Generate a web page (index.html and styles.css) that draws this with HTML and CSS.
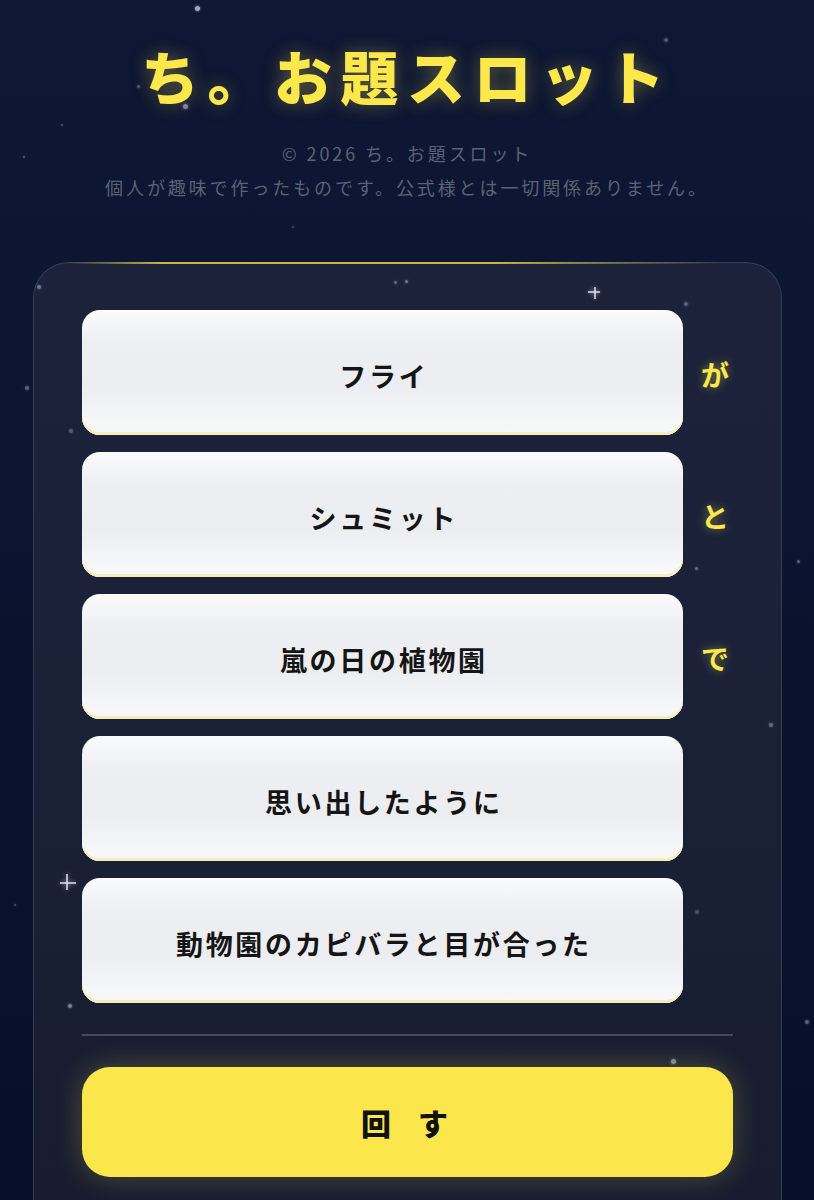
FILE: index.html
```html
<!DOCTYPE html>
<html lang="ja">
<head>
<meta charset="utf-8">
<title>ち。お題スロット</title>
<link rel="stylesheet" href="styles.css">
</head>
<body>
<div class="sky">
  <span class="star s1"></span><span class="star s2"></span><span class="star s3"></span>
  <span class="star s4"></span><span class="star s5"></span><span class="star s6"></span>
  <span class="star s7"></span><span class="star s8"></span><span class="star s9"></span>
  <span class="star s10"></span><span class="star s11"></span><span class="star s12"></span>
  <span class="star s13"></span><span class="star s14"></span><span class="star s15"></span>
  <span class="star s16"></span><span class="star s17"></span><span class="star s18"></span>
  <span class="star s19"></span><span class="star s20"></span><span class="star s21"></span>
  <span class="sparkle k1"></span><span class="sparkle k2"></span>
</div>
<header class="header">
  <h1 class="title">ち。お題スロット</h1>
  <p class="note">© 2026 ち。お題スロット</p>
  <p class="note">個人が趣味で作ったものです。公式様とは一切関係ありません。</p>
</header>
<main class="card">
  <div class="slots">
    <div class="row"><div class="reel">フライ</div><span class="joint">が</span></div>
    <div class="row"><div class="reel">シュミット</div><span class="joint">と</span></div>
    <div class="row"><div class="reel">嵐の日の植物園</div><span class="joint">で</span></div>
    <div class="row"><div class="reel">思い出したように</div><span class="joint"></span></div>
    <div class="row"><div class="reel">動物園のカピバラと目が合った</div><span class="joint"></span></div>
  </div>
  <hr class="divider">
  <button class="spin" type="button">回 す</button>
</main>
</body>
</html>
```
FILE: styles.css
```css
html, body {
  margin: 0;
  padding: 0;
}
body {
  min-height: 1200px;
  background: linear-gradient(180deg, #0e1733 0%, #0b1430 40%, #080f28 100%);
  font-family: "Noto Sans CJK JP", "Noto Sans", sans-serif;
  overflow: hidden;
  position: relative;
}
.sky {
  position: absolute;
  inset: 0;
  pointer-events: none;
  z-index: 2;
}
.star {
  position: absolute;
  width: 3px;
  height: 3px;
  border-radius: 50%;
  background: rgba(200, 210, 235, 0.7);
  box-shadow: 0 0 3px rgba(200, 210, 235, 0.6);
}
.s1 { left: 195px; top: 6px; width: 5px; height: 5px; background: rgba(190, 205, 240, 0.8); }
.s2 { left: 137px; top: 85px; opacity: 0.5; }
.s3 { left: 183px; top: 104px; width: 5px; height: 5px; opacity: 0.8; }
.s4 { left: 61px; top: 124px; width: 2px; height: 2px; opacity: 0.5; }
.s5 { left: 23px; top: 156px; width: 2px; height: 2px; opacity: 0.5; }
.s6 { left: 664px; top: 38px; width: 4px; height: 4px; opacity: 0.5; }
.s7 { left: 292px; top: 226px; width: 2px; height: 2px; opacity: 0.4; }
.s8 { left: 37px; top: 285px; width: 4px; height: 4px; opacity: 0.7; }
.s9 { left: 394px; top: 281px; opacity: 0.6; }
.s10 { left: 405px; top: 280px; opacity: 0.7; }
.s11 { left: 684px; top: 302px; width: 4px; height: 4px; opacity: 0.5; }
.s12 { left: 25px; top: 386px; width: 4px; height: 4px; opacity: 0.6; }
.s13 { left: 69px; top: 429px; width: 4px; height: 4px; opacity: 0.5; }
.s14 { left: 695px; top: 567px; opacity: 0.6; }
.s15 { left: 797px; top: 560px; opacity: 0.6; }
.s16 { left: 769px; top: 723px; width: 4px; height: 4px; opacity: 0.6; }
.s17 { left: 14px; top: 904px; width: 2px; height: 2px; opacity: 0.5; }
.s18 { left: 68px; top: 1004px; width: 4px; height: 4px; opacity: 0.8; }
.s19 { left: 695px; top: 910px; width: 4px; height: 4px; opacity: 0.4; }
.s20 { left: 671px; top: 1059px; width: 5px; height: 5px; opacity: 0.8; }
.s21 { left: 805px; top: 1020px; width: 4px; height: 4px; opacity: 0.6; }
.sparkle {
  position: absolute;
  width: 14px;
  height: 14px;
  background:
    linear-gradient(90deg, transparent 6px, rgba(220, 225, 240, 0.75) 6px, rgba(220, 225, 240, 0.75) 8px, transparent 8px),
    linear-gradient(0deg, transparent 6px, rgba(220, 225, 240, 0.75) 6px, rgba(220, 225, 240, 0.75) 8px, transparent 8px);
  filter: drop-shadow(0 0 2px rgba(220, 225, 240, 0.6));
}
.k1 { left: 588px; top: 287px; width: 12px; height: 12px; }
.k2 { left: 60px; top: 874px; width: 16px; height: 16px; }

.header {
  padding-top: 41px;
  text-align: center;
}
.title {
  margin: 0 0 27px;
  font-size: 58px;
  line-height: 68px;
  font-weight: 900;
  letter-spacing: 8.5px;
  color: #fde84c;
  text-shadow: 0 0 18px rgba(253, 232, 76, 0.35);
}
.note {
  margin: 0;
  font-size: 18px;
  line-height: 34px;
  letter-spacing: 2.9px;
  color: #5a6276;
  font-weight: 400;
}

.card {
  position: relative;
  margin: 58px 32px 0 33px;
  min-height: 980px;
  box-sizing: border-box;
  padding: 47px 48px 0;
  border: 1px solid #363e54;
  border-bottom: none;
  border-radius: 36px 36px 0 0;
  background: linear-gradient(180deg, #1b223a 0%, #1a2137 50%, #171c2f 100%);
}
.card::before {
  content: "";
  position: absolute;
  left: 30px;
  right: 60px;
  top: -1px;
  height: 2px;
  background: linear-gradient(90deg, rgba(216, 196, 70, 0) 0%, rgba(216, 196, 70, 0.9) 15%, rgba(216, 196, 70, 0.9) 65%, rgba(216, 196, 70, 0) 100%);
}
.slots {
  display: flex;
  flex-direction: column;
  gap: 17px;
}
.row {
  display: grid;
  grid-template-columns: 601px 1fr;
  column-gap: 18px;
  align-items: center;
}
.reel {
  height: 125px;
  box-sizing: border-box;
  padding-top: 5px;
  display: flex;
  align-items: center;
  justify-content: center;
  border-radius: 18px;
  background: linear-gradient(180deg, #fbfbfc 0%, #eeeff2 25%, #ecedf0 60%, #f6f7f9 92%, #f8f8fa 100%);
  box-shadow: inset 0 -3px 0 #f5edbb, inset 0 -1px 0 #faf6de;
  font-size: 27px;
  font-weight: 700;
  letter-spacing: 2.7px;
  padding-left: 2.7px;
  color: #151515;
}
.joint {
  font-size: 28px;
  font-weight: 700;
  color: #fde84c;
  text-shadow: 0 0 10px rgba(253, 232, 76, 0.45);
  padding-top: 2px;
}
.divider {
  margin: 31px 0 0;
  border: none;
  height: 2px;
  background: #434a5c;
}
.spin {
  display: block;
  width: 100%;
  height: 110px;
  margin-top: 31px;
  border: none;
  border-radius: 28px;
  background: #fbe74b;
  box-shadow: 0 0 28px rgba(251, 231, 75, 0.25);
  font-family: "Noto Sans CJK JP", "Noto Sans", sans-serif;
  font-size: 30px;
  font-weight: 900;
  letter-spacing: 10px;
  padding-left: 10px;
  color: #111;
}
```
